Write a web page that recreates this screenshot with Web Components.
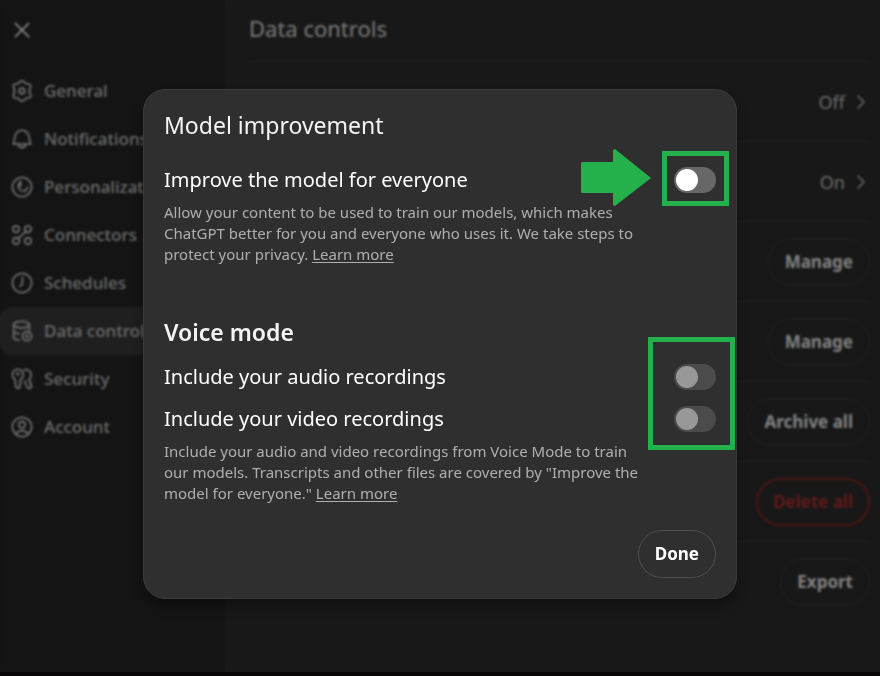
<!DOCTYPE html>
<html lang="en">
<head>
<meta charset="utf-8">
<meta name="viewport" content="width=device-width, initial-scale=1">
<title>Data controls</title>
<style>
  * { box-sizing: border-box; }
  body {
    margin: 0;
    min-height: 100vh;
    display: flex;
    flex-direction: column;
    background: #0a0506;
    font-family: "Noto Sans", "Open Sans", sans-serif;
    overflow: hidden;
  }
</style>
</head>
<body>
<settings-app></settings-app>

<script>
const ICONS = {
  close: `<path d="M4 4l16 16M20 4L4 20"/>`,
  chevron: `<path d="M8 4l8 8-8 8"/>`,
  general: `<path d="M9.500 2.200Q12 -.6 14.500 2.200Q15.800 4.600 18.500 4.200Q22.300 4.400 21.300 8Q19.400 10.300 20.600 12Q19.400 13.700 21.300 16Q22.300 19.600 18.500 19.800Q15.800 19.400 14.500 21.800Q12 24.600 9.500 21.800Q8.200 19.400 5.500 19.800Q1.700 19.600 2.700 16Q4.600 13.700 3.400 12Q4.600 10.300 2.700 8Q1.700 4.400 5.500 4.200Q8.200 4.600 9.500 2.200z"/><circle cx="12" cy="12" r="3"/>`,
  notifications: `<path d="M2.500 17.500c1.300-1.500 1-3.500 1.400-6.500C4.500 5.800 7.500 2.500 12 2.500s7.500 3.300 8.100 8.500c.4 3 .1 5 1.400 6.500z"/><path d="M8 18c.6 2.300 2 3.500 4 3.500s3.400-1.200 4-3.500"/>`,
  personalization: `<circle cx="12" cy="12" r="10.500"/><path d="M10.500 6c-3.500 2.800-3.300 7.200 0 9.500M10.500 6v5M12.500 16.500c2.500.4 4.800-1.200 5.300-4"/>`,
  connectors: `<circle cx="5.500" cy="5.500" r="3.500"/><circle cx="18.500" cy="5.500" r="3.500"/><circle cx="5.500" cy="18.500" r="3.500"/><circle cx="18.500" cy="18.500" r="3.500"/><path d="M8 16l8-8"/>`,
  schedules: `<circle cx="12" cy="12" r="10.500"/><path d="M12.500 6v5.500c0 1.800-.8 3-2.700 4"/>`,
  data: `<ellipse cx="11.500" cy="5" rx="8.500" ry="3.500"/><path d="M3 5v14c0 1.500 1.500 2.500 5.500 3M20 5v6M3 12c.5 1.500 2.500 2.500 5.500 3"/><circle cx="17.500" cy="17.500" r="5"/><circle cx="17.500" cy="17.500" r="1"/>`,
  security: `<path d="M4.500 12.500C-.5 9 1.500 1.500 7.500 1.500s8 7.500 3 11l-.8 1.500 1 2-1 2.300.5 1.700-2.500 2.500-2.500-2.500-.7-7.500z"/><circle cx="7.500" cy="6.500" r="1"/><path d="M14.500 2c6-1.500 9.500 4.500 6 9.500l-1 2 2.500 3-.8 2 1.300 1.500-2 2.500-3-1.500-2.500-7"/>`,
  account: `<circle cx="12" cy="12" r="10.500"/><circle cx="12" cy="9.500" r="3.500"/><path d="M5.500 19.500c1.500-2.300 3.800-3.500 6.500-3.500s5 1.200 6.500 3.500"/>`,
};

const NAV = [
  ["general", "General"],
  ["notifications", "Notifications"],
  ["personalization", "Personalization"],
  ["connectors", "Connectors"],
  ["schedules", "Schedules"],
  ["data", "Data controls"],
  ["security", "Security"],
  ["account", "Account"],
];

class UiIcon extends HTMLElement {
  constructor() {
    super();
    this.attachShadow({ mode: "open" });
  }

  connectedCallback() {
    this.shadowRoot.innerHTML = `
      <style>
        :host { display: block; width: 22px; height: 22px; flex-shrink: 0; }
        svg {
          display: block;
          width: 100%;
          height: 100%;
          overflow: visible;
          fill: none;
          stroke: currentColor;
          stroke-width: 2;
          stroke-linecap: round;
          stroke-linejoin: round;
        }
      </style>
      <svg viewBox="0 0 24 24" aria-hidden="true">${ICONS[this.getAttribute("name")]}</svg>
    `;
  }
}

class PillButton extends HTMLElement {
  constructor() {
    super();
    this.attachShadow({ mode: "open" });
    this.shadowRoot.innerHTML = `
      <style>
        :host { display: block; color: #828282; --edge: #232323; }
        :host([variant="danger"]) { color: #5e1a18; --edge: #4a1614; }
        :host([variant="solid"]) { color: #ffffff; --edge: #4f4f4f; }
        button {
          display: block;
          height: 48px;
          padding: 0 16px;
          border: 1px solid var(--edge);
          border-radius: 24px;
          background: none;
          color: inherit;
          font: 700 17px/24px "Noto Sans", "Open Sans", sans-serif;
          cursor: pointer;
        }
        :host([variant="danger"]) button { border-width: 2px; padding: 0 15px; }
      </style>
      <button type="button"><slot></slot></button>
    `;
  }
}

class SettingsNav extends HTMLElement {
  constructor() {
    super();
    this.attachShadow({ mode: "open" });
  }

  connectedCallback() {
    this.shadowRoot.innerHTML = `
      <style>
        :host {
          display: flex;
          flex-direction: column;
          background: #141414;
          color: #6c6c6c;
        }
        button {
          display: flex;
          align-items: center;
          gap: 11px;
          width: 100%;
          height: 48px;
          padding: 0 11px;
          border: 0;
          border-radius: 12px;
          background: none;
          color: inherit;
          font: 500 17px/24px "Noto Sans", "Open Sans", sans-serif;
          text-align: left;
          cursor: pointer;
        }
        .close { height: 60px; padding: 0 12px; margin-bottom: 7px; color: #848484; }
        .close ui-icon { width: 20px; height: 20px; }
        .active { background: #1f1f1f; }
      </style>
      <button class="close" type="button" aria-label="Close"><ui-icon name="close"></ui-icon></button>
      <nav>
        ${NAV.map(([icon, label]) => `
          <button type="button" ${icon === "data" ? `class="active" aria-current="page"` : ""}>
            <ui-icon name="${icon}"></ui-icon>${label}
          </button>
        `).join("")}
      </nav>
    `;
  }
}

class SettingsPanel extends HTMLElement {
  constructor() {
    super();
    this.attachShadow({ mode: "open" });
  }

  connectedCallback() {
    this.shadowRoot.innerHTML = `
      <style>
        :host {
          display: block;
          padding: 0 10px 0 24px;
          background: #181818;
          color: #7a7a7a;
        }
        h1 {
          margin: 0;
          padding: 13px 0 18px;
          font-size: 22px;
          line-height: 30px;
          font-weight: 400;
        }
        .row {
          display: flex;
          align-items: center;
          justify-content: flex-end;
          box-sizing: border-box;
          height: 80px;
          border-top: 1px solid #212121;
        }
        .value {
          display: flex;
          align-items: center;
          gap: 7px;
          padding: 0;
          border: 0;
          background: none;
          color: #6c6c6c;
          font: 400 18px/24px "Noto Sans", "Open Sans", sans-serif;
          cursor: pointer;
        }
        .value ui-icon { width: 18px; height: 18px; }
      </style>
      <h1>Data controls</h1>
      <div class="row"><button class="value" type="button">Off<ui-icon name="chevron"></ui-icon></button></div>
      <div class="row"><button class="value" type="button">On<ui-icon name="chevron"></ui-icon></button></div>
      <div class="row"><pill-button>Manage</pill-button></div>
      <div class="row"><pill-button>Manage</pill-button></div>
      <div class="row"><pill-button>Archive all</pill-button></div>
      <div class="row"><pill-button variant="danger">Delete all</pill-button></div>
      <div class="row"><pill-button>Export</pill-button></div>
    `;
  }
}

class ToggleRow extends HTMLElement {
  constructor() {
    super();
    this.attachShadow({ mode: "open" });
  }

  connectedCallback() {
    this.shadowRoot.innerHTML = `
      <style>
        :host {
          display: flex;
          align-items: center;
          justify-content: space-between;
          height: 28px;
        }
        label { font-size: 20px; line-height: 28px; color: #ffffff; }
        input {
          appearance: none;
          flex-shrink: 0;
          width: 42px;
          height: 26px;
          margin: 0;
          padding: 2px;
          border-radius: 13px;
          background: #676767;
          box-sizing: border-box;
        }
        input::before {
          content: "";
          display: block;
          width: 22px;
          height: 22px;
          border-radius: 50%;
          background: #ffffff;
        }
        input:checked::before { margin-left: auto; }
        input:disabled { background: #4b4b4b; }
        input:disabled::before { background: #989898; }
      </style>
      <label for="toggle"><slot></slot></label>
      <input id="toggle" type="checkbox" role="switch" ${this.hasAttribute("disabled") ? "disabled" : ""}>
    `;
  }
}

// Green frame and arrow that point the reader at a control
class CalloutBox extends HTMLElement {
  constructor() {
    super();
    this.attachShadow({ mode: "open" });
    this.shadowRoot.innerHTML = `
      <style>
        :host {
          display: block;
          position: absolute;
          box-sizing: border-box;
          border: 5px solid #24b04b;
          pointer-events: none;
        }
      </style>
    `;
  }
}

class CalloutArrow extends HTMLElement {
  constructor() {
    super();
    this.attachShadow({ mode: "open" });
    this.shadowRoot.innerHTML = `
      <style>
        :host { display: block; position: absolute; width: 70px; height: 58px; pointer-events: none; }
        svg { display: block; fill: #24b04b; }
      </style>
      <svg width="70" height="58" viewBox="0 0 70 58" aria-hidden="true">
        <path d="M1 13h31V1l2-1 36 29-36 28-2-1V44H1l-1-1V14z"/>
      </svg>
    `;
  }
}

class ModelDialog extends HTMLElement {
  constructor() {
    super();
    this.attachShadow({ mode: "open" });
  }

  connectedCallback() {
    this.shadowRoot.innerHTML = `
      <style>
        :host {
          display: block;
          box-sizing: border-box;
          width: 100%;
          max-width: 594px;
          padding: 20px;
          border: 1px solid #3b3b3b;
          border-radius: 22px;
          background: #2f2f2f;
          box-shadow: 0 8px 12px rgba(0, 0, 0, 0.3);
          color: #f4f4f4;
        }
        h2 { margin: 0; font-size: 23px; line-height: 30px; font-weight: 400; }
        h2.voice { margin-top: 52px; font-weight: 600; }
        .group { position: relative; display: grid; gap: 14px; margin-top: 26px; }
        .voice + .group { margin-top: 16px; }
        p {
          max-width: 480px;
          margin: 8px 0 0;
          font-size: 15px;
          line-height: 21px;
          color: #afafaf;
        }
        a { color: inherit; text-underline-offset: 2px; }
        .actions { display: flex; justify-content: flex-end; margin-top: 26px; }
        .single { top: -15px; right: -13px; width: 67px; height: 55px; }
        .pair { top: -26px; right: -19px; width: 87px; height: 113px; }
        callout-arrow { top: -17px; right: 65px; }
      </style>
      <h2>Model improvement</h2>
      <div class="group">
        <toggle-row>Improve the model for everyone</toggle-row>
        <callout-arrow></callout-arrow>
        <callout-box class="single"></callout-box>
      </div>
      <p>Allow your content to be used to train our models, which makes ChatGPT better for you and everyone who uses it. We take steps to protect your privacy. <a href="#model">Learn more</a></p>
      <h2 class="voice">Voice mode</h2>
      <div class="group">
        <toggle-row disabled>Include your audio recordings</toggle-row>
        <toggle-row disabled>Include your video recordings</toggle-row>
        <callout-box class="pair"></callout-box>
      </div>
      <p>Include your audio and video recordings from Voice Mode to train our models. Transcripts and other files are covered by "Improve the model for everyone." <a href="#voice">Learn more</a></p>
      <div class="actions"><pill-button variant="solid">Done</pill-button></div>
    `;
    this.setAttribute("role", "dialog");
    this.setAttribute("aria-label", "Model improvement");
  }
}

class SettingsApp extends HTMLElement {
  constructor() {
    super();
    this.attachShadow({ mode: "open" });
  }

  connectedCallback() {
    this.shadowRoot.innerHTML = `
      <style>
        :host {
          flex: 1;
          position: relative;
          display: grid;
          grid-template-columns: 225px 1fr;
          margin-bottom: 4px;
        }
        .overlay {
          position: absolute;
          inset: 0;
          display: flex;
          align-items: center;
          justify-content: center;
          padding: 16px 16px 0;
          backdrop-filter: blur(1px);
        }
      </style>
      <settings-nav></settings-nav>
      <settings-panel></settings-panel>
      <div class="overlay"><model-dialog></model-dialog></div>
    `;
  }
}

customElements.define("ui-icon", UiIcon);
customElements.define("pill-button", PillButton);
customElements.define("settings-nav", SettingsNav);
customElements.define("settings-panel", SettingsPanel);
customElements.define("toggle-row", ToggleRow);
customElements.define("callout-box", CalloutBox);
customElements.define("callout-arrow", CalloutArrow);
customElements.define("model-dialog", ModelDialog);
customElements.define("settings-app", SettingsApp);
</script>
</body>
</html>
